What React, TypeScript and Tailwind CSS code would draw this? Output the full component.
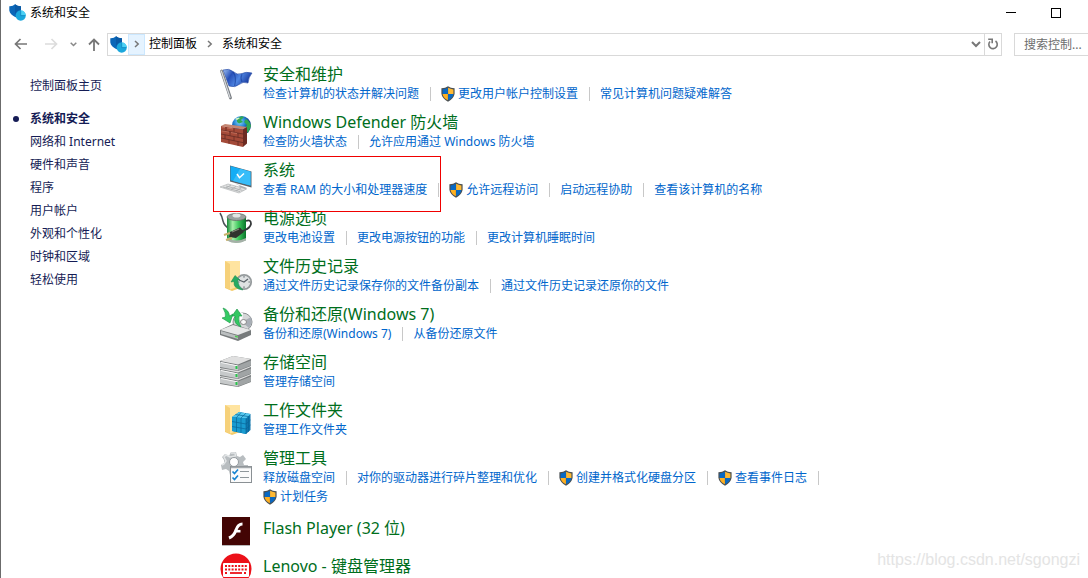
import type { ReactNode } from "react";

type Task = { label: string; shield?: boolean };
type Category = { title: string; icon: ReactNode; tasks: Task[]; marked?: boolean };

const iconClass = "block h-8 w-8 shrink-0 overflow-visible";

function SecurityLogo() {
  return (
    <svg viewBox="0 0 17 17" className="block h-[17px] w-[17px] shrink-0" aria-hidden="true">
      <path d="M0.300 2.200Q4 2.400 6 0.300Q8.500 2.400 12 2.200V6.500Q11 11.500 6.500 13.300Q1 10.500 0.300 6.500Z" fill="#0b67b8" />
      <path d="M6 0.300Q8.500 2.400 12 2.200V6Q8 6 6 10Z" fill="#0a5aa6" />
      <circle cx="11.700" cy="11.600" r="5.100" fill="#1aa7dc" />
      <path d="M11.700 11.600V6.500A5.100 5.100 0 0 1 16.800 11.600Z" fill="#4cd1f5" />
      <path d="M11.700 7v4.600h4.600" fill="none" stroke="#0b7fbd" strokeWidth=".7" />
    </svg>
  );
}

function Shield() {
  return (
    <svg viewBox="0 0 14 16" className="mr-[3px] block h-4 w-[14px] shrink-0" aria-hidden="true">
      <path d="M7 .3Q9.5 2.2 13.6 2.2V7.8Q13 12.5 7 15.7Q1 12.5.4 7.8V2.2Q4.5 2.2 7 .3Z" fill="#4b5053" />
      <path d="M6.9 1.8V8H1.6V3.4Q4.8 3.2 6.9 1.8Z" fill="#0869c4" />
      <path d="M7.1 1.8V8h5.3V3.4Q9.2 3.2 7.1 1.8Z" fill="#ffb932" />
      <path d="M6.9 8v6.3Q2 11.7 1.6 8Z" fill="#ffb020" />
      <path d="M7.1 8v6.3Q12 11.7 12.4 8Z" fill="#0869c4" />
    </svg>
  );
}

const flag = (
  <svg viewBox="0 0 32 32" className={iconClass} aria-hidden="true">
    <defs>
      <linearGradient id="flagBlue" x1="0" x2="1" y1="0" y2=".4">
        <stop offset="0" stopColor="#a5c6f5" />
        <stop offset=".35" stopColor="#264fb8" />
        <stop offset=".65" stopColor="#4f86e2" />
        <stop offset="1" stopColor="#1a3ca0" />
      </linearGradient>
    </defs>
    <path d="M3 2Q9 0 13 3.500Q17 7.500 22 5.500Q26 3.500 32 5Q28.500 9 28 15Q23 13 19 16.500Q15 20 9 18Z" fill="url(#flagBlue)" stroke="#2346a1" strokeWidth=".6" />
    <path d="M13 4Q17 9 14.500 18M22 6Q20 10 22 14" fill="none" stroke="#163a98" strokeWidth="1.200" opacity=".6" />
    <path d="M1.500 3L10.500 30" stroke="#777b80" strokeWidth="2.800" strokeLinecap="round" />
    <path d="M1.300 3L10 29.500" stroke="#d9dcdf" strokeWidth="1.200" strokeLinecap="round" />
  </svg>
);

const firewall = (
  <svg viewBox="0 0 32 32" className={iconClass} aria-hidden="true">
    <defs>
      <radialGradient id="globe" cx=".4" cy=".3">
        <stop offset="0" stopColor="#8fdcff" />
        <stop offset=".6" stopColor="#2584d4" />
        <stop offset="1" stopColor="#123f91" />
      </radialGradient>
    </defs>
    <circle cx="21.500" cy="9.500" r="9.500" fill="url(#globe)" />
    <path d="M17 3Q21 -1 24 1L21 4L23 6L19 7.500L17 6ZM26 3Q30 5 31 10L28 17L25 12L27 9L24 6Z" fill="#32a852" />
    <path d="M15 3Q18 1 20 2L17 4Z" fill="#d5f5c8" />
    <path d="M1 10L5 8L27 11L23 13.500Z" fill="#c48672" />
    <path d="M1 10L23 13.500V31L1 26Z" fill="#a44a38" />
    <path d="M23 13.500L27 11V27.500L23 31Z" fill="#6e2b22" />
    <path d="M1 14L23 18M1 18L23 22.300M1 22L23 26.600M6 11V14.900M14 12.200V16.300M10 15.600V19.700M18 17.100V21.300M5 18.800V22.900M14 20.500V24.700M9 23.700V27.800M18 25.600V29.800M23 18L27 15M23 22L27 19M23 26.500L27 23.500" fill="none" stroke="#642c25" strokeWidth=".8" />
    <path d="M1.500 14.800L9 16.100M11 16.500L17 17.600M2 11L5 11.500M7 12L13 13" stroke="#cf7b66" strokeWidth=".7" />
  </svg>
);

const computer = (
  <svg viewBox="0 4 32 32" className={iconClass} aria-hidden="true">
    <path d="M14 23L20 26L16 29L23 31L27 28Z" fill="#aab0b5" />
    <path d="M10 5.500L31.500 11.500V27.500L10 21.500Z" fill="#58626a" />
    <path d="M10.500 6L30.500 11.700V25.500L10.500 20.300Z" fill="#14adf5" />
    <path d="M20 8.700L30.500 11.700V25.500L13 21Z" fill="#37bdf9" />
    <path d="M17 14L19.500 17.700L24 13.500" fill="none" stroke="#fff" strokeWidth="1.500" />
    <path d="M0 27L8 24L26.500 29L19 33Z" fill="#e2e3e3" stroke="#a7abad" strokeWidth=".6" />
    <path d="M3 27L20 31.600M6 26L22.500 30.400M6 28L11 25M11 29.500L16 26.500M16 31L21 28" stroke="#a9adaf" strokeWidth=".8" />
  </svg>
);

const battery = (
  <svg viewBox="0 0 32 32" className={iconClass} aria-hidden="true">
    <defs>
      <linearGradient id="cell">
        <stop offset="0" stopColor="#178a38" />
        <stop offset=".3" stopColor="#a5efa9" />
        <stop offset=".6" stopColor="#3fc85e" />
        <stop offset="1" stopColor="#08762a" />
      </linearGradient>
    </defs>
    <path d="M0 1Q2 4 3 9T11 18" fill="none" stroke="#4c5358" strokeWidth="1.500" />
    <path d="M7 5V28Q16 33.500 26 28V5Z" fill="url(#cell)" />
    <ellipse cx="16.500" cy="5" rx="9.500" ry="3.500" fill="#9ba2a0" stroke="#667068" strokeWidth=".8" />
    <ellipse cx="16.500" cy="3.500" rx="4" ry="2" fill="#e2e4e2" />
    <path d="M7 26Q16 31 26 26V28.500Q16 33.500 7 28.500Z" fill="#a6b0a8" />
    <path d="M26 9Q31 7 31 12Q30 16 25 18L20 20" fill="none" stroke="#343839" strokeWidth="1.800" />
    <path d="M10 20L20 15.500L24 20L16 26L9 25Z" fill="#30342e" />
    <path d="M12 20L19 17" stroke="#838779" strokeWidth="1.200" />
    <path d="M10 21L4 23M12 26L6 28" stroke="#c9b36d" strokeWidth="2" />
  </svg>
);

const folderPart = (
  <>
    <path d="M5 2L13 1V6L20 4V28L12 31L5 28Z" fill="#f4cb68" />
    <path d="M5 1H20V26L10 29.500Z" fill="#ffe4a0" />
    <path d="M5 1L10 4V30L5 27Z" fill="#f6d17a" />
  </>
);

const fileHistory = (
  <svg viewBox="0 0 32 32" className={iconClass} aria-hidden="true">
    {folderPart}
    <circle cx="24" cy="22" r="7.200" fill="#dfe2e3" stroke="#969b9d" strokeWidth="1.800" />
    <path d="M19 20L24 22L28 19M24 16.200V17.500M24 26.500V27.800M18.200 22H19.500M28.500 22H29.800" fill="none" stroke="#596168" strokeWidth="1.200" />
    <path d="M11 22L15 15.500L20 20H17.500Q18 26 23 30Q13 29 14 21.500Z" fill="#28aa63" stroke="#16834a" strokeWidth=".5" />
  </svg>
);

const backup = (
  <svg viewBox="0 0 32 32" className={iconClass} aria-hidden="true">
    <ellipse cx="22.500" cy="14" rx="9.500" ry="9" fill="#d5d7d8" stroke="#8b9092" />
    <path d="M22 14L31 9Q33 15 29 20Z" fill="#a8aeb6" />
    <path d="M22 14L14 8Q18 4 23 5Z" fill="#fff" />
    <path d="M0 22L13 16L31 22V27L18 33L0 27Z" fill="#777b7c" />
    <path d="M0 22L13 17L31 22L18 27Z" fill="#e7e8e8" />
    <ellipse cx="23.500" cy="14" rx="3" ry="2.500" fill="#fafafa" stroke="#888" />
    <path d="M1 23L18 28V31L1 26Z" fill="#bbbfc0" />
    <path d="M15 28.200L18 29.100" stroke="#4fcb50" strokeWidth="1.500" />
    <path d="M3 0Q9 2 9.500 8L13 6L10 15L2 10L5.500 9Q6 5 3 0Z" fill="#34cb63" stroke="#159044" strokeWidth=".6" />
    <path d="M12 8L17 1L22 8L19 8Q18 14 21 19Q13 16 15 8Z" fill="#32c761" stroke="#159044" strokeWidth=".6" />
  </svg>
);

const storage = (
  <svg viewBox="0 0 32 32" className={iconClass} aria-hidden="true">
    {[17, 9, 1].map((y) => (
      <g key={y} transform={`translate(0 ${y})`}>
        <path d="M0 4L13 -1L31 2V9L18 14L0 11Z" fill="#777b7c" />
        <path d="M0 4L13 -1L31 2L18 7.500Z" fill="#e0e0e0" />
        <path d="M0 5L18 8.500V13.500L0 10Z" fill="#c6c9ca" />
        <path d="M1 5.500L17.500 8.900" stroke="#f7f7f7" />
        <path d="M18 8.500L31 3.500V8.500L18 13.500Z" fill="#a0a4a5" />
        <path d="M16.500 9V12" stroke="#28c44a" strokeWidth="2" />
      </g>
    ))}
  </svg>
);

const workFolders = (
  <svg viewBox="0 0 32 32" className={iconClass} aria-hidden="true">
    {folderPart}
    <path d="M12 13L19 8L30.500 10V26L26 30L12 27Z" fill="#0e76ad" />
    <path d="M12 13L19 8L30.500 10L26 14.500Z" fill="#54c6ed" />
    <path d="M12 13L26 14.500V30L12 27Z" fill="#199bd0" />
    <path d="M12 17.500L26 20L30.500 16M12 22.500L26 25L30.500 21M16.500 13.500V28M21 14V29M26 14.500V30M28.500 12V28M15.500 10.500L28 12.500M21 8.500L16.500 13.500M26 9.200L21 14" fill="none" stroke="#086598" strokeWidth=".7" />
  </svg>
);

const adminTools = (
  <svg viewBox="0 0 32 32" className={iconClass} aria-hidden="true">
    <path d="M11 0H16L17 4L20 5L23 3L26 7L23 10L24 13H28V17L23 18L20 23H10L9 19L6 17L2 18L1 13L4 11V8L2 5L5 2L9 4Z" fill="#b8bdc0" />
    <path d="M11 1H15L15.500 4L10 5L6 3L4 5L6 9L4 12L2 13" fill="none" stroke="#e2e5e6" strokeWidth="1.500" />
    <circle cx="14" cy="10" r="4.500" fill="#fff" stroke="#969ca0" />
    <rect x="10.500" y="14.500" width="21" height="16" fill="#fbfbfb" stroke="#8a9094" />
    <path d="M11 15.500H31" stroke="#a5aaad" strokeWidth="1.500" />
    <path d="M12.500 19.500L14.500 21.500L18 17.500M12.500 25.500L14.500 27.500L18 23.500" fill="none" stroke="#1784d1" strokeWidth="1.700" />
    <path d="M20 19.500H29M20 25.500H29" stroke="#8f979b" />
  </svg>
);

const flash = (
  <svg viewBox="0 0 32 32" className={iconClass} aria-hidden="true">
    <rect x="2" y="3" width="28" height="28" fill="#b9b9b9" />
    <rect x="2" y="2" width="28" height="28" fill="#430504" />
    <path d="M22.500 9Q18 9 16 15T9 23" fill="none" stroke="#fff" strokeWidth="3" />
    <path d="M15 16.200H20.500" stroke="#fff" strokeWidth="2.600" />
  </svg>
);

const keyboard = (
  <svg viewBox="0 0 32 32" className={iconClass} aria-hidden="true">
    <circle cx="16" cy="16" r="15.500" fill="#ec1119" />
    <rect x="3" y="10" width="26" height="14" rx="1" fill="#fff" />
    <path d="M5 13H27M5 16.500H27M5 20H8M24 20H27" stroke="#ec1119" strokeWidth="1.800" strokeDasharray="2 1.300" />
    <path d="M10 20H22" stroke="#ec1119" strokeWidth="1.800" />
  </svg>
);

const categories: Category[] = [
  {
    title: "安全和维护",
    icon: flag,
    tasks: [
      { label: "检查计算机的状态并解决问题" },
      { label: "更改用户帐户控制设置", shield: true },
      { label: "常见计算机问题疑难解答" },
    ],
  },
  {
    title: "Windows Defender 防火墙",
    icon: firewall,
    tasks: [{ label: "检查防火墙状态" }, { label: "允许应用通过 Windows 防火墙" }],
  },
  {
    title: "系统",
    icon: computer,
    marked: true,
    tasks: [
      { label: "查看 RAM 的大小和处理器速度" },
      { label: "允许远程访问", shield: true },
      { label: "启动远程协助" },
      { label: "查看该计算机的名称" },
    ],
  },
  {
    title: "电源选项",
    icon: battery,
    tasks: [{ label: "更改电池设置" }, { label: "更改电源按钮的功能" }, { label: "更改计算机睡眠时间" }],
  },
  {
    title: "文件历史记录",
    icon: fileHistory,
    tasks: [{ label: "通过文件历史记录保存你的文件备份副本" }, { label: "通过文件历史记录还原你的文件" }],
  },
  {
    title: "备份和还原(Windows 7)",
    icon: backup,
    tasks: [{ label: "备份和还原(Windows 7)" }, { label: "从备份还原文件" }],
  },
  { title: "存储空间", icon: storage, tasks: [{ label: "管理存储空间" }] },
  { title: "工作文件夹", icon: workFolders, tasks: [{ label: "管理工作文件夹" }] },
  {
    title: "管理工具",
    icon: adminTools,
    tasks: [
      { label: "释放磁盘空间" },
      { label: "对你的驱动器进行碎片整理和优化" },
      { label: "创建并格式化硬盘分区", shield: true },
      { label: "查看事件日志", shield: true },
      { label: "计划任务", shield: true },
    ],
  },
  { title: "Flash Player (32 位)", icon: flash, tasks: [] },
  { title: "Lenovo - 键盘管理器", icon: keyboard, tasks: [] },
];

const sidebar = [
  "系统和安全",
  "网络和 Internet",
  "硬件和声音",
  "程序",
  "用户帐户",
  "外观和个性化",
  "时钟和区域",
  "轻松使用",
];

function Chevron() {
  return (
    <svg viewBox="0 0 6 8" className="block h-2 w-[6px]" aria-hidden="true">
      <path d="M1 1L4.200 4L1 7" fill="none" stroke="#777" strokeWidth="1.500" />
    </svg>
  );
}

function CategoryRow({ category }: { category: Category }) {
  const hasTasks = category.tasks.length > 0;
  return (
    <li className={hasTasks ? "relative flex gap-[11px] pb-[9px]" : "relative flex gap-[11px] pb-[6px]"}>
      <div className={hasTasks ? "h-8 pt-1" : "h-8"}>{category.icon}</div>
      <div className={hasTasks ? "min-w-0" : "min-w-0 pt-[3px]"}>
        <h2 className="text-base leading-5 text-[#006e1c]">
          <a href="#category">{category.title}</a>
        </h2>
        {hasTasks && (
          <ul className="flex max-w-[600px] flex-wrap text-xs leading-[19px] text-[#0066cc]">
            {category.tasks.map((task, i) => (
              <li key={task.label} className="flex h-[19px] items-center whitespace-nowrap">
                <a href="#task" className="flex items-center">
                  {task.shield && <Shield />}
                  {task.label}
                </a>
                {i < category.tasks.length - 1 && <span className="mr-[10px] ml-[11px] h-[14px] w-px bg-[#c8c8c8]" />}
              </li>
            ))}
          </ul>
        )}
      </div>
      {category.marked && (
        <div className="pointer-events-none absolute -top-1 -left-[7px] z-10 h-14 w-[228px] border border-[#f00000]" />
      )}
    </li>
  );
}

export default function App() {
  return (
    <div className="relative flex h-screen flex-col overflow-hidden border-l border-[#6b6b6b] bg-white font-['Noto_Sans','Noto_Sans_CJK_SC',sans-serif] text-xs text-black">
      <header className="flex h-[25px] shrink-0 items-center pr-[10px] pl-2">
        <SecurityLogo />
        <h1 className="ml-1 grow">系统和安全</h1>
        <button aria-label="最小化" className="flex h-full w-[45px] items-center justify-center">
          <span className="h-px w-[10px] bg-black" />
        </button>
        <button aria-label="最大化" className="flex h-full w-[45px] items-center justify-center">
          <span className="h-[10px] w-[10px] border border-black" />
        </button>
      </header>

      <nav className="flex h-[38px] shrink-0 items-center pl-3" aria-label="导航">
        <button aria-label="后退" className="flex w-[15px] justify-center">
          <svg viewBox="0 0 14 12" className="h-3 w-[14px]">
            <path d="M13 6H1.500M6.500 1L1.500 6L6.500 11" fill="none" stroke="#777" strokeWidth="1.700" />
          </svg>
        </button>
        <button aria-label="前进" className="ml-[15px] flex w-[15px] justify-center">
          <svg viewBox="0 0 14 12" className="h-3 w-[14px]">
            <path d="M1 6H12.500M7.500 1L12.500 6L7.500 11" fill="none" stroke="#dcdcdc" strokeWidth="1.700" />
          </svg>
        </button>
        <button aria-label="最近的位置" className="ml-3 flex w-[7px] justify-center">
          <svg viewBox="0 0 7 5" className="h-[5px] w-[7px]">
            <path d="M.7 .7L3.500 3.500L6.300 .7" fill="none" stroke="#888" strokeWidth="1.500" />
          </svg>
        </button>
        <button aria-label="上移" className="ml-[10px] flex w-[14px] justify-center">
          <svg viewBox="0 0 12 13" className="h-[13px] w-3">
            <path d="M6 13V1.500M1 6.500L6 1.500L11 6.500" fill="none" stroke="#777" strokeWidth="1.800" />
          </svg>
        </button>
        <div className="ml-[6px] flex h-[23px] min-w-0 grow items-center border border-[#d9d9d9]">
          <div className="flex w-5 justify-center">
            <SecurityLogo />
          </div>
          <button aria-label="展开" className="flex h-[21px] w-[17px] items-center justify-center border border-[#cce8ff] bg-[#e5f3ff]">
            <Chevron />
          </button>
          <a href="#panel" className="ml-1">控制面板</a>
          <span className="flex w-[25px] justify-center">
            <Chevron />
          </span>
          <a href="#security" className="grow">系统和安全</a>
          <button aria-label="历史记录" className="flex w-[17px] justify-center">
            <svg viewBox="0 0 10 7" className="h-[7px] w-[10px]">
              <path d="M1 1L5 5L9 1" fill="none" stroke="#777" strokeWidth="2" />
            </svg>
          </button>
          <button aria-label="刷新" className="flex h-full w-[17px] items-center justify-center border-l border-[#d9d9d9]">
            <svg viewBox="0 0 12 12" className="h-3 w-3">
              <path d="M8.500 3A4.200 4.200 0 1 1 3 3.500" fill="none" stroke="#777" strokeWidth="1.600" />
              <path d="M1.200 1.300H5.200V5.300" fill="none" stroke="#777" strokeWidth="1.600" />
            </svg>
          </button>
        </div>
        <input
          aria-label="搜索控制面板"
          placeholder="搜索控制..."
          className="ml-3 h-[23px] w-[74px] shrink-0 border border-r-0 border-[#d9d9d9] pl-[9px] outline-none placeholder:text-[#6d6d6d]"
        />
      </nav>

      <div className="flex min-h-0 grow">
        <aside className="w-[219px] shrink-0 pt-[11px] pl-[11px] leading-[23px] text-[#151c55]">
          <a href="#home" className="mb-[10px] ml-[18px] block">控制面板主页</a>
          <ul>
            {sidebar.map((item, i) => (
              <li key={item} className={i === 0 ? "flex items-center font-bold" : "flex items-center"}>
                <span className={i === 0 ? "mr-[11px] ml-px h-[6px] w-[6px] rounded-full bg-[#151c55]" : "w-[18px]"} />
                <a href="#section">{item}</a>
              </li>
            ))}
          </ul>
        </aside>
        <main className="min-w-0 grow pt-px">
          <ul>
            {categories.map((category) => (
              <CategoryRow key={category.title} category={category} />
            ))}
          </ul>
        </main>
      </div>

      <p className="pointer-events-none absolute right-2 bottom-2 font-['Liberation_Sans',sans-serif] text-base leading-5 text-[#e4e4e4]">
        https://blog.csdn.net/sgongzi
      </p>
    </div>
  );
}
